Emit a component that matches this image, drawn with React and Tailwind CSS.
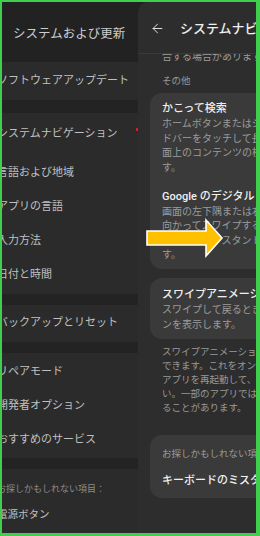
import React from 'react';
import { ArrowLeft } from 'lucide-react';

function LeftRow({ label, className }) {
  return (
    <div className={'flex items-center ' + className}>
      <span className="-ml-[5px]">{label}</span>
    </div>
  );
}

function Gap() {
  return <div className="h-[11px] bg-[#232323]" />;
}

function Line({ children }) {
  return <div className="whitespace-nowrap">{children}</div>;
}

export default function App() {
  return (
    <div className="relative w-[260px] h-[536px] overflow-hidden bg-[#3fcf4c] pt-[2px] pl-[2px] pr-[4px] pb-[3px] font-['Roboto','Noto_Sans_CJK_JP',sans-serif]">
      <div className="flex h-full overflow-hidden bg-[#222222]">
        {/* left: settings list, dimmed */}
        <div className="relative w-[136px] shrink-0 flex flex-col overflow-hidden bg-[#2b2b2b]">
          <div className="h-[60px] shrink-0 flex items-center pl-[11px] pt-[4px] bg-[#222222] text-[12.5px] text-[#cdcdcd] whitespace-nowrap">
            システムおよび更新
          </div>
          <div className="text-[11px] text-[#c0c0c0] whitespace-nowrap">
            <LeftRow label="ソフトウェアアップデート" className="h-[38px]" />
            <div className="h-[13px] bg-[#232323]" />
            <div className="pb-[2px]">
              <LeftRow label="システムナビゲーション" className="h-[43px]" />
              <LeftRow label="言語および地域" className="h-[34px]" />
              <LeftRow label="アプリの言語" className="h-[34px]" />
              <LeftRow label="入力方法" className="h-[34px]" />
              <LeftRow label="日付と時間" className="h-[34px]" />
            </div>
            <Gap />
            <LeftRow label="バックアップとリセット" className="h-[37px]" />
            <Gap />
            <div className="pt-[2px] pb-[1px]">
              <LeftRow label="リペアモード" className="h-[34px]" />
              <LeftRow label="開発者オプション" className="h-[34px]" />
              <LeftRow label="おすすめのサービス" className="h-[34px]" />
            </div>
            <Gap />
            <div className="pt-[12px] text-[9px] leading-[16px] text-[#8c8c8c]">
              <span className="-ml-[5px]">お探しかもしれない項目：</span>
            </div>
            <LeftRow label="電源ボタン" className="h-[36px] text-[10.5px]" />
          </div>
          <div className="absolute right-0 top-[126px] w-[2px] h-[3px] bg-[#c62828]" />
        </div>

        {/* right: system navigation page */}
        <div className="flex-1 min-w-0 flex flex-col overflow-hidden rounded-tl-[10px] bg-[#2d2d2d]">
          <div className="h-[52px] shrink-0 flex items-center pt-[2px] border-b border-[#3a3a3a]">
            <ArrowLeft className="ml-[12px] w-[15px] h-[15px] shrink-0 text-[#dedede]" strokeWidth={1.6} />
            <span className="ml-[15px] text-[13px] font-medium text-[#efefef] whitespace-nowrap">
              システムナビゲーション
            </span>
          </div>
          <div className="flex-1 overflow-hidden pl-[12px]">
            <div className="w-[250px]">
              <div className="-mt-[5px] pl-[12px] text-[10px] leading-[15px] text-[#9c9c9c] whitespace-nowrap">
                合する場合があります。
              </div>
              <div className="mt-[9px] pl-[12px] text-[9.5px] leading-[16px] text-[#9a9a9a]">その他</div>

              <div className="mt-[4px] rounded-[12px] bg-[#3a3a3a] px-[12px] pt-[7px] pb-[6.5px]">
                <div className="text-[11px] leading-[17px] font-medium text-[#efefef] whitespace-nowrap">かこって検索</div>
                <div className="text-[10px] leading-[14.5px] text-[#9c9c9c]">
                  <Line>ホームボタンまたはジェスチャーのハン</Line>
                  <Line>ドバーをタッチして長押しすると、画</Line>
                  <Line>面上のコンテンツの検索を開始できま</Line>
                  <Line>す。</Line>
                </div>
                <div className="mt-[12.5px] text-[11px] leading-[17px] font-medium text-[#efefef] whitespace-nowrap">
                  Google のデジタル アシスタント
                </div>
                <div className="text-[10px] leading-[14.5px] text-[#9c9c9c]">
                  <Line>画面の左下隅または右下隅から斜め上に</Line>
                  <Line>向かってスワイプすると、Google の</Line>
                  <Line>デジタルアシスタントを起動できま</Line>
                  <Line>す。</Line>
                </div>
              </div>

              <div className="mt-[9px] rounded-[12px] bg-[#3a3a3a] px-[12px] pt-[8px] pb-[7px]">
                <div className="text-[11px] leading-[17px] font-medium text-[#efefef] whitespace-nowrap">スワイプアニメーション</div>
                <div className="text-[10px] leading-[14.5px] text-[#9c9c9c]">
                  <Line>スワイプして戻るときにアニメーショ</Line>
                  <Line>ンを表示します。</Line>
                </div>
              </div>

              <div className="mt-[6px] pl-[12px] text-[9.5px] leading-[14px] text-[#9a9a9a]">
                <Line>スワイプアニメーションはいつでもオフに</Line>
                <Line>できます。これをオンにした後は、</Line>
                <Line>アプリを再起動して、アニメーションを</Line>
                <Line>い。一部のアプリでは、表示されない</Line>
                <Line>ることがあります。</Line>
              </div>

              <div className="mt-[20px] rounded-[12px] bg-[#3a3a3a] px-[12px] pt-[11px] pb-[9px]">
                <div className="text-[9.5px] leading-[16px] text-[#9a9a9a] whitespace-nowrap">お探しかもしれない項目</div>
                <div className="mt-[10px] text-[11px] leading-[17px] font-medium text-[#efefef] whitespace-nowrap">
                  キーボードのミスタッチ防止
                </div>
              </div>
            </div>
          </div>
        </div>
      </div>

      {/* yellow annotation arrow */}
      <svg className="absolute left-[144px] top-[214px]" width="82" height="50" viewBox="0 0 82 50">
        <polygon
          points="3,17 62,17 62,6 78,24 62,42 62,31 3,31"
          fill="#ffc000"
          stroke="#ffffff"
          strokeWidth="1.6"
          strokeLinejoin="miter"
        />
      </svg>
    </div>
  );
}
